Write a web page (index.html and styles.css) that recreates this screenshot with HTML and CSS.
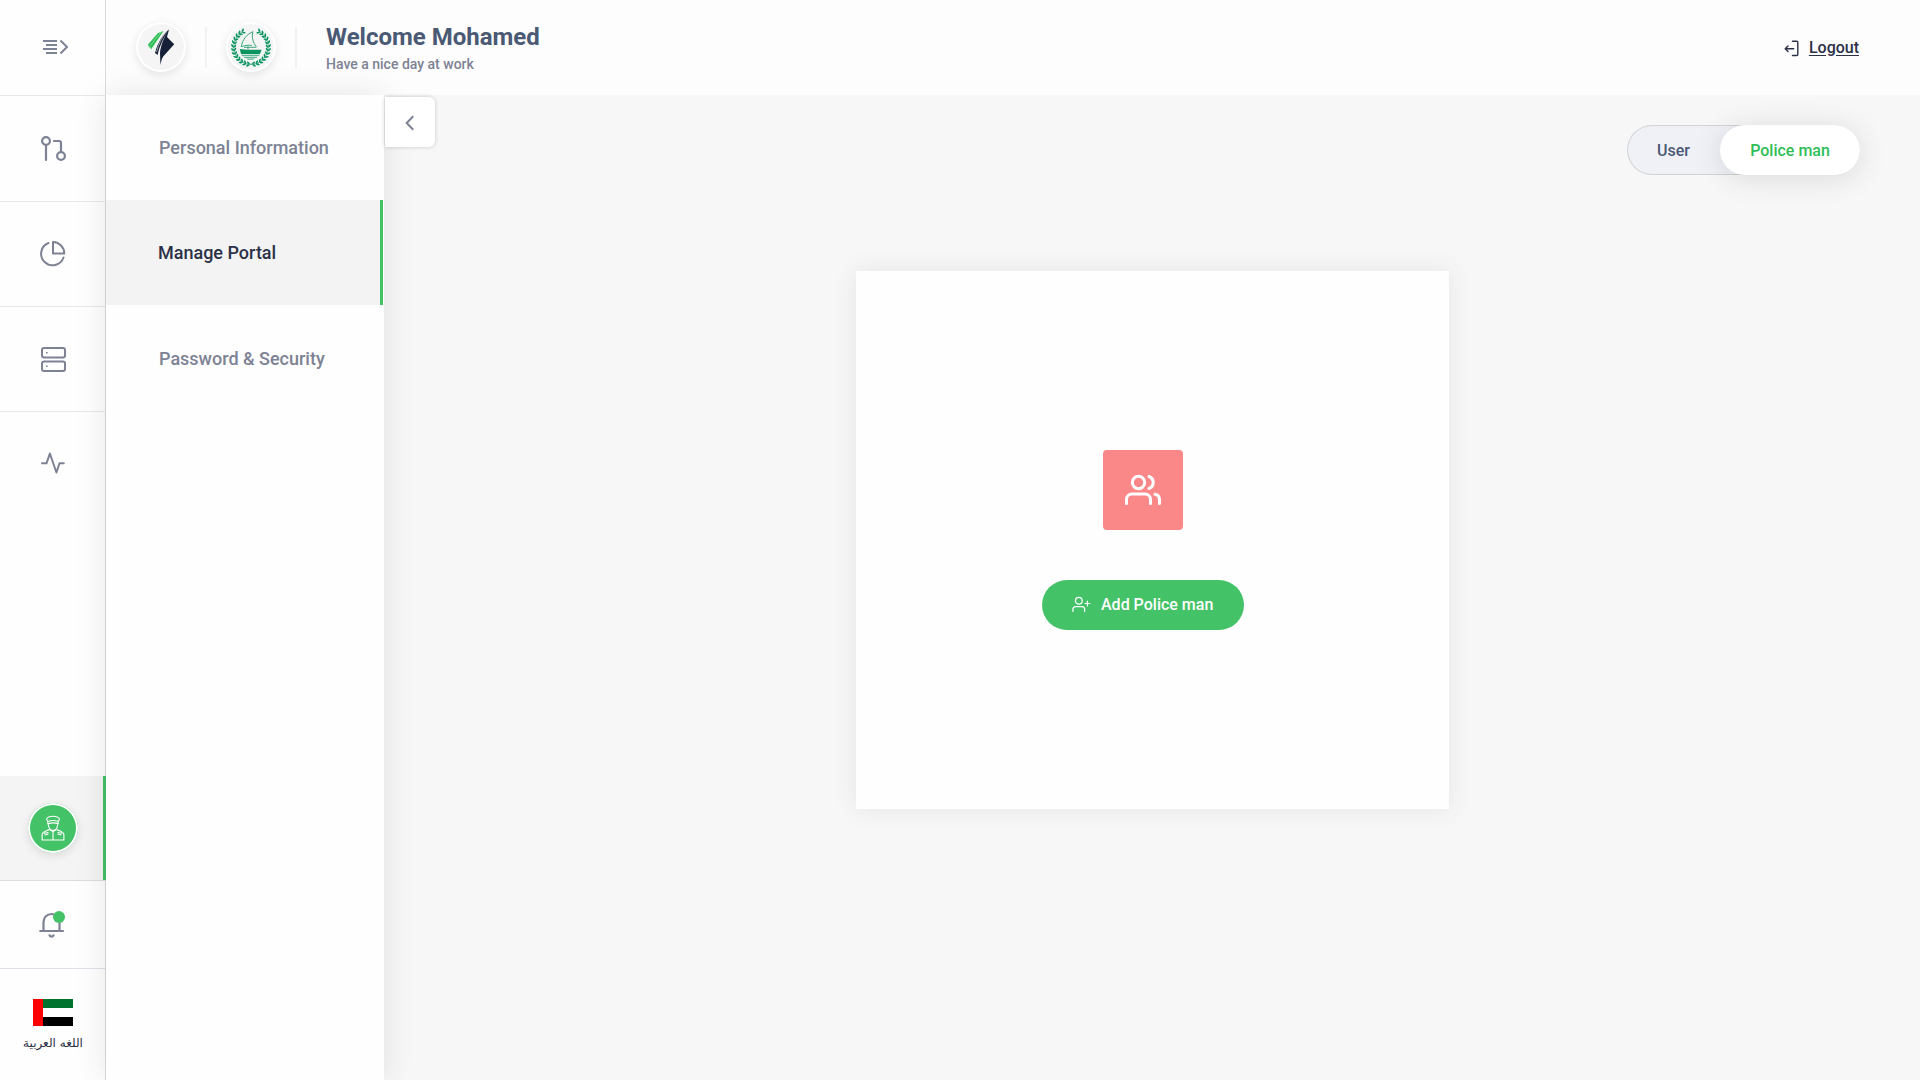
FILE: index.html
```html
<!DOCTYPE html>
<html lang="en">
<head>
<meta charset="utf-8">
<title>Manage Portal</title>
<link rel="stylesheet" href="styles.css">
</head>
<body>
<div class="app">
  <aside class="rail">
    <button class="rail-item rail-menu" aria-label="Expand menu">
      <svg width="26" height="16" viewBox="0 0 26 16" fill="none" stroke="currentColor" stroke-width="2"><path d="M0 2h14M3 6h11M0 10h14M3 14h11M17.500 1.500l6.500 6.500-6.500 6.500"/></svg>
    </button>
    <a class="rail-item rail-requests">
      <svg width="26" height="26" viewBox="0 0 26 26" fill="none" stroke="currentColor" stroke-width="2.200" stroke-linecap="round"><circle cx="5" cy="5" r="3.900"/><circle cx="20" cy="20" r="3.900"/><path d="M5 9v15M13 5h5a2 2 0 0 1 2 2v9"/></svg>
    </a>
    <a class="rail-item">
      <svg width="26" height="26" viewBox="0 0 26 26" fill="none" stroke="currentColor" stroke-width="2" stroke-linecap="round" stroke-linejoin="round"><path d="M8.500 2A11.500 11.500 0 1 0 23.500 16.500M13 1v11.500h11.300A11.500 11.500 0 0 0 13 1z"/></svg>
    </a>
    <a class="rail-item rail-server">
      <svg width="26" height="26" viewBox="0 0 26 26" fill="none" stroke="currentColor" stroke-width="2"><rect x="1" y="1" width="23" height="9.500" rx="2"/><rect x="1" y="14.500" width="23" height="9.500" rx="2"/><path d="M5 5.700h1.600M5 19.300h1.600" stroke-width="1.600"/></svg>
    </a>
    <a class="rail-item rail-last">
      <svg width="26" height="24" viewBox="0 0 26 24" fill="none" stroke="currentColor" stroke-width="2" stroke-linecap="round" stroke-linejoin="round"><path d="M2 12.300h4.500L9.900 2.500l6.500 19 3.100-9.200h4.300"/></svg>
    </a>
    <div class="rail-bottom">
      <a class="rail-item is-active">
        <span class="avatar avatar-officer">
          <svg width="24" height="26" viewBox="0 0 24 26" fill="none" stroke="#fff" stroke-width="1.100" stroke-linejoin="round"><path d="M5.500 4.500C6 2 8.500 1.200 12 1.200s6 .8 6.500 3.300L17.200 6.500c-3-1.100-7.400-1.100-10.400 0zM6.800 6.500v2.300c3-1.100 7.400-1.100 10.400 0V6.500M7.200 9c.3 3 1.800 6.300 4.800 6.600 3-.3 4.500-3.600 4.800-6.600M8 14.500c-1.500 1.500-6.500 1.800-6.900 5V25h21.800v-5.500c-.4-3.200-5.400-3.500-6.900-5M8.500 14.500l3.500 2 3.500-2M12 16.500V25M3 18.300l4.500-.8M3.500 20l4-1M21 18.300l-4.500-.8M20.500 20l-4-1"/></svg>
        </span>
      </a>
      <a class="rail-item rail-bell">
        <svg width="27" height="27" viewBox="0 0 27 27" fill="none" stroke="currentColor" stroke-width="2.200" stroke-linecap="round"><path d="M1.200 20h22.800M4.500 19.500V11a8 8 0 0 1 16 0v8.500M10.500 24.300c.8 1.700 3.200 1.700 4 0"/><circle cx="20" cy="6" r="6" fill="#44c267" stroke="none"/></svg>
      </a>
      <a class="rail-lang">
        <svg width="40" height="27" viewBox="0 0 40 27"><path fill="#fff" d="M0 0h40v27H0z"/><path fill="#00732f" d="M10 0h30v9H10z"/><path d="M10 18h30v9H10z"/><path fill="#f00" d="M0 0h10v27H0z"/></svg>
        <span lang="ar" dir="rtl">اللغه العربية</span>
      </a>
    </div>
  </aside>

  <div class="page">
    <header class="header">
      <span class="avatar">
        <svg width="50" height="50" viewBox="0 0 50 50"><path fill="#2dbe55" d="M12 22.500 22 11l5.500-2L15 27.500l-.8-2.500-1 .8z"/><path stroke="#f5f5f5" stroke-width=".4" d="M13.500 24.500 25 10"/><path fill="#162138" d="M33 7.500C27 12 22 20 19 31l2.500 2C23.500 24 27.500 15.500 33 7.500zM33 7.500C28 15 24.500 24 24 31l.4 12c.6-3 1.600-7 2.800-8.500L38.200 22.300 31 15z"/><path fill="none" stroke="#f5f5f5" stroke-width=".6" d="M30.500 9.500C25.500 15 22.500 23 20.500 30"/></svg>
      </span>
      <span class="divider"></span>
      <span class="avatar">
        <svg width="50" height="50" viewBox="0 0 50 50" fill="#0b9360">
          <defs>
            <g id="leaf"><path d="M0 17.300C1.500 16.900 3.400 17.800 3.600 19.800 1.700 20 .3 19 0 17.300zM0 17.300C1.400 17.400 3 16.400 3.100 14.700 1.300 14.500.1 15.700 0 17.300z"/></g>
            <g id="branch">
              <use href="#leaf" transform="rotate(-4)"/><use href="#leaf" transform="rotate(-16)"/><use href="#leaf" transform="rotate(-28)"/><use href="#leaf" transform="rotate(-40)"/><use href="#leaf" transform="rotate(-52)"/><use href="#leaf" transform="rotate(-64)"/><use href="#leaf" transform="rotate(-76)"/><use href="#leaf" transform="rotate(-88)"/><use href="#leaf" transform="rotate(-100)"/><use href="#leaf" transform="rotate(-112)"/><use href="#leaf" transform="rotate(-124)"/><use href="#leaf" transform="rotate(-136)"/><use href="#leaf" transform="rotate(-148)"/>
              <path d="M-1 17.300A17.300 17.300 0 0 0 9-14.800" fill="none" stroke="#0b9360" stroke-width=".6"/>
            </g>
          </defs>
          <g transform="translate(25 25)"><use href="#branch" transform="scale(-1 1)"/><use href="#branch"/></g>
          <path d="M13.800 27 21 27.700h14.600L34 32H15z"/>
          <path d="M15 32.800h19l-1.200 1.300H16.200zM17 34.700h15l-1.800 1.300H18.800zM20 36.600h9l-2 1.200h-5z" opacity=".65"/>
          <path d="M27 9.700C21 12 16 18 15.400 24.700c4-1.500 7.500-1.700 10.500-1.200M27 9.700c-1.500 4-.5 10.500 3.700 15.600M22 24.500v3M18 25.300h12" fill="none" stroke="#0b9360" stroke-width=".8"/>
        </svg>
      </span>
      <span class="divider"></span>
      <div class="welcome">
        <h1>Welcome Mohamed</h1>
        <p>Have a nice day at work</p>
      </div>
      <a class="logout">
        <svg width="15" height="17" viewBox="0 0 15 17" fill="none" stroke="currentColor" stroke-width="1.400" stroke-linecap="round" stroke-linejoin="round"><path d="M8.500 1.200h4.300c.7 0 1 .3 1 1v12.300c0 .7-.3 1-1 1H8.500M9.700 8.700H1.200M4 5.900 1.200 8.700 4 11.500"/></svg>
        <span>Logout</span>
      </a>
    </header>
    <div class="body">
      <nav class="panel">
        <a class="panel-item">Personal Information</a>
        <a class="panel-item is-active">Manage Portal</a>
        <a class="panel-item panel-security">Password &amp; Security</a>
        <button class="collapse" aria-label="Collapse panel">
          <svg width="10" height="16" viewBox="0 0 10 16" fill="none" stroke="currentColor" stroke-width="2"><path d="M8.200 1.200 1.700 8l6.500 6.800"/></svg>
        </button>
      </nav>
      <main class="content">
        <div class="switch">
          <a class="switch-option">User</a>
          <a class="switch-option is-selected">Police man</a>
        </div>
        <section class="card">
          <div class="tile">
            <svg width="36" height="32" viewBox="0 0 36 32" fill="none" stroke="#fff" stroke-width="3" stroke-linecap="round"><circle cx="13.500" cy="8.500" r="6.200"/><path d="M1.500 29.500v-4a5.500 5.500 0 0 1 5.500-5.500h13a5.500 5.500 0 0 1 5.500 5.500v4M24 2.500a6.400 6.400 0 0 1 0 12M30 20.300a5.500 5.500 0 0 1 4.500 5.300v3.900"/></svg>
          </div>
          <button class="add">
            <svg width="19" height="17" viewBox="0 0 19 17" fill="none" stroke="currentColor" stroke-width="1.200" stroke-linecap="round"><circle cx="6.800" cy="4.700" r="3.400"/><path d="M.9 15.500v-2a2.900 2.900 0 0 1 2.900-2.900h6a2.900 2.900 0 0 1 2.900 2.900v2M13 7.500h4.800M15.400 5.100v4.800"/></svg>
            <span>Add Police man</span>
          </button>
        </section>
      </main>
    </div>
  </div>
</div>
</body>
</html>
```
FILE: styles.css
```css
* { box-sizing: border-box; }
body { margin: 0; font-family: Roboto, "Liberation Sans", sans-serif; font-weight: 500; color: #7d8294; }
button { border: 0; background: none; padding: 0; font: inherit; color: inherit; }
h1, p { margin: 0; }
svg { display: block; flex: none; }

.app { display: flex; width: 1920px; height: 1080px; background: #f7f7f7; overflow: hidden; }

.rail { display: flex; flex-direction: column; flex: none; width: 106px; background: #fefefe; border-right: 1px solid #dcdcdc; }
.rail-item { display: flex; align-items: center; justify-content: center; width: 106px; height: 105px; border-bottom: 1px solid #e8e8e9; }
.rail-menu { height: 96px; padding: 0 0 1px 6px; }
.rail-requests { height: 106px; padding: 1px 0 0 2px; }
.rail-server { padding: 2px 0 0 2px; }
.rail-last { border-bottom: 0; padding-bottom: 3px; }
.rail-bottom { margin-top: auto; }
.rail-item.is-active { background: #f4f4f4; border-bottom-color: #dcdcdf; box-shadow: inset -3px 0 #44c267; }
.rail-bell { height: 88px; padding-right: 1px; border-bottom-color: #e0e1e8; }
.rail-lang { display: flex; flex-direction: column; align-items: center; gap: 8px; height: 111px; padding: 30px 0 0 1px; font: 12px/18px "DejaVu Sans", sans-serif; color: #2b3147; }

.avatar { display: flex; align-items: center; justify-content: center; flex: none; width: 50px; height: 50px; border-radius: 50%; background: #f5f5f5; box-shadow: inset 0 0 0 2px #fff, 0 3px 10px rgba(0, 0, 0, .1); }
.avatar-officer { background: #44c267; }

.page { display: flex; flex-direction: column; flex: 1; }
.header { display: flex; align-items: center; height: 95px; padding: 0 61px 1px 30px; background: #fdfdfd; }
.divider { width: 2px; height: 41px; margin: 0 19px; background: #f2f2f2; }
.welcome { margin-left: 10px; padding-top: 2px; }
.welcome h1 { font-size: 24px; line-height: 28px; font-weight: 700; color: #4a5974; }
.welcome p { margin-top: 4px; font-size: 14px; line-height: 18px; }
.logout { display: flex; align-items: center; gap: 10px; margin-left: auto; font-size: 16px; color: #2b3147; text-decoration: underline; text-underline-offset: 2px; }
.logout svg { margin-top: 3px; }

.body { display: flex; flex: 1; }
.panel { position: relative; width: 278px; background: #fefefe; box-shadow: 0 0 30px rgba(0, 0, 0, .1); }
.panel-item { display: flex; align-items: center; height: 105px; padding-left: 53px; font-size: 18px; }
.panel-item.is-active { padding-left: 52px; color: #2b3147; background: #f3f3f3; border-right: 3px solid #44c267; margin-right: 1px; }
.panel-security { padding-top: 2px; }
.collapse { position: absolute; left: 279px; top: 2px; display: flex; align-items: center; justify-content: center; width: 50px; height: 50px; padding-top: 2px; border-radius: 0 6px 6px 0; background: #fff; box-shadow: 0 0 4px rgba(0, 0, 0, .2); }

.content { display: flex; flex-direction: column; flex: 1; padding: 30px 60px 0 0; }
.switch { display: flex; align-self: flex-end; width: 233px; height: 50px; border-radius: 25px; background: #eff1f6; box-shadow: inset 0 0 0 1px #d2d3d5; font-size: 16px; }
.switch-option { display: flex; align-items: center; justify-content: center; width: 93px; color: #4a5974; }
.switch-option.is-selected { width: 140px; border-radius: 25px; background: #fff; color: #2dbe55; box-shadow: 0 3px 30px rgba(0, 0, 0, .12); }
.card { display: flex; flex-direction: column; align-items: center; width: 593px; height: 538px; margin: 96px 0 0 472px; padding: 179px 19px 0 0; background: #fefefe; box-shadow: 0 0 25px rgba(0, 0, 0, .08); }
.tile { display: flex; align-items: center; justify-content: center; width: 80px; height: 80px; border-radius: 4px; background: #fb8888; }
.add { display: flex; align-items: center; gap: 10px; width: 202px; height: 50px; margin-top: 50px; padding: 0 0 1px 30px; border-radius: 25px; background: #44c267; color: #fff; font-size: 16px; }
```
